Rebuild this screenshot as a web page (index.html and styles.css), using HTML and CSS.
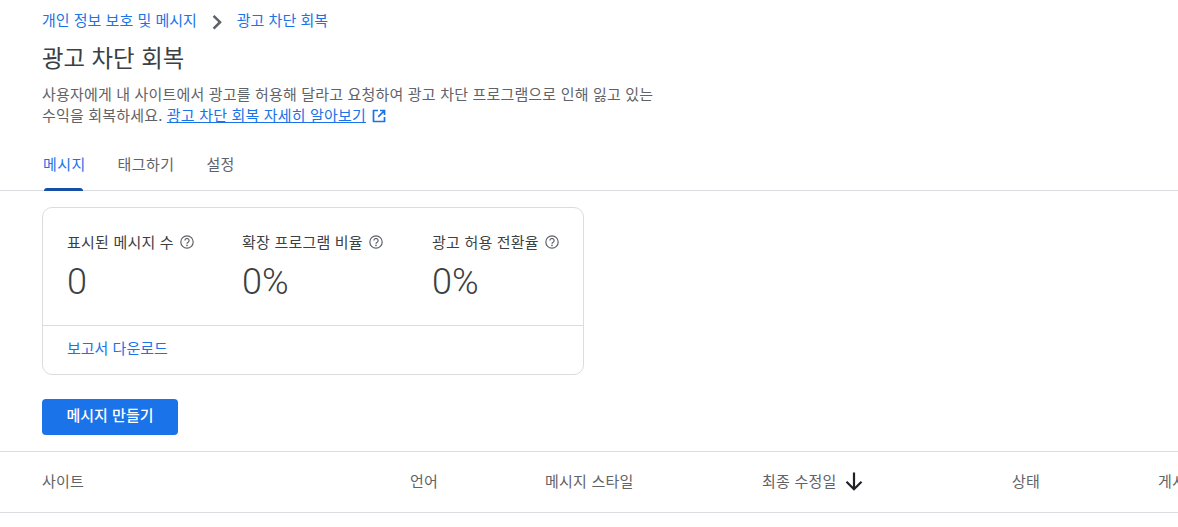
FILE: index.html
```html
<!DOCTYPE html>
<html lang="ko">
<head>
<meta charset="utf-8">
<title>광고 차단 회복</title>
<link rel="stylesheet" href="styles.css">
</head>
<body>
<header class="head">
  <nav class="crumbs">
    <a class="link" href="#">개인 정보 보호 및 메시지</a>
    <svg class="chev" width="24" height="24" viewBox="0 0 24 24"><path d="M8.6 5.8 15 12.2 8.6 18.6" fill="none" stroke="#5f6368" stroke-width="2.6"/></svg>
    <a class="link" href="#">광고 차단 회복</a>
  </nav>
  <h1 class="title">광고 차단 회복</h1>
  <p class="desc">사용자에게 내 사이트에서 광고를 허용해 달라고 요청하여 광고 차단 프로그램으로 인해 잃고 있는 수익을 회복하세요. <a class="learn" href="#">광고 차단 회복 자세히 알아보기</a><svg class="ext" width="16" height="16" viewBox="0 0 16 16"><path d="M7 2.5H2.5v11h11V9M9 2.5h4.5V7M13.5 2.5 7.2 8.8" fill="none" stroke="#1a73e8" stroke-width="1.7"/></svg></p>
</header>
<div class="tabs">
  <a class="tab active" href="#">메시지</a>
  <a class="tab" href="#">태그하기</a>
  <a class="tab" href="#">설정</a>
</div>
<main class="content">
  <section class="card">
    <div class="stats">
      <div class="stat stat-a">
        <div class="label">표시된 메시지 수 <svg class="help" width="14" height="14" viewBox="0 0 14 14"><circle cx="7" cy="7" r="6.2" fill="none" stroke="#5f6368" stroke-width="1.2"/><path d="M4.9 5.5a2.1 2.1 0 1 1 3.2 1.8c-.8.4-1.1.8-1.1 1.5" fill="none" stroke="#5f6368" stroke-width="1.2"/><circle cx="7" cy="10.4" r=".8" fill="#5f6368"/></svg></div>
        <div class="value">0</div>
      </div>
      <div class="stat stat-b">
        <div class="label">확장 프로그램 비율 <svg class="help" width="14" height="14" viewBox="0 0 14 14"><circle cx="7" cy="7" r="6.2" fill="none" stroke="#5f6368" stroke-width="1.2"/><path d="M4.9 5.5a2.1 2.1 0 1 1 3.2 1.8c-.8.4-1.1.8-1.1 1.5" fill="none" stroke="#5f6368" stroke-width="1.2"/><circle cx="7" cy="10.4" r=".8" fill="#5f6368"/></svg></div>
        <div class="value">0%</div>
      </div>
      <div class="stat">
        <div class="label">광고 허용 전환율 <svg class="help" width="14" height="14" viewBox="0 0 14 14"><circle cx="7" cy="7" r="6.2" fill="none" stroke="#5f6368" stroke-width="1.2"/><path d="M4.9 5.5a2.1 2.1 0 1 1 3.2 1.8c-.8.4-1.1.8-1.1 1.5" fill="none" stroke="#5f6368" stroke-width="1.2"/><circle cx="7" cy="10.4" r=".8" fill="#5f6368"/></svg></div>
        <div class="value">0%</div>
      </div>
    </div>
    <div class="card-foot"><a class="link" href="#">보고서 다운로드</a></div>
  </section>
  <button class="primary" type="button">메시지 만들기</button>
</main>
<div class="table-head">
  <div class="col col-site">사이트</div>
  <div class="col col-lang">언어</div>
  <div class="col col-style">메시지 스타일</div>
  <div class="col col-date">최종 수정일<svg class="sort" width="24" height="24" viewBox="0 0 24 24"><path d="M12 3.5v16.5M4.5 12.8 12 20.2l7.5-7.4" fill="none" stroke="#202124" stroke-width="2.2"/></svg></div>
  <div class="col col-state">상태</div>
  <div class="col col-pub">게시됨</div>
</div>
</body>
</html>
```
FILE: styles.css
```css
* { box-sizing: border-box; }
html, body { height: 100%; }
body {
  margin: 0;
  overflow: hidden;
  background: #fff;
  color: #3c4043;
  font-family: "Noto Sans CJK KR", "Noto Sans", sans-serif;
  font-size: 15px;
}
a { text-decoration: none; }
.link { color: #1a73e8; font-size: 15px; line-height: 20px; }
.head { padding: 8px 0 0 42px; }
.crumbs { display: flex; align-items: center; height: 24px; }
.chev { margin: 3px 8px 0 8px; }
.title {
  margin: 7px 0 0;
  font-size: 23.4px;
  font-weight: 400;
  line-height: 36px;
  color: #3c4043;
}
.desc {
  margin: 8px 0 0;
  width: 620px;
  font-size: 15px;
  letter-spacing: .17px;
  line-height: 21px;
  color: #5f6368;
}
.learn { color: #1a73e8; text-decoration: underline; }
.ext { margin-left: 5px; vertical-align: -3px; }
.tabs {
  display: flex;
  height: 65px;
  margin-top: 1px;
  padding: 16px 0 0 42px;
  border-bottom: 1px solid #dadce0;
  gap: 30px;
}
.tab {
  position: relative;
  color: #5f6368;
  line-height: 44px;
  height: 49px;
  padding: 0 1px;
  letter-spacing: .4px;
}
.tab.active { color: #1a73e8; }
.tab.active::after {
  content: "";
  position: absolute;
  left: 2px;
  right: 4px;
  bottom: 0;
  height: 3px;
  background: #174ea6;
  border-radius: 3px 3px 0 0;
}
.content { padding: 16px 0 0 42px; }
.card {
  width: 542px;
  height: 168px;
  border: 1px solid #dadce0;
  border-radius: 10px;
}
.stats {
  display: flex;
  height: 117px;
  padding: 24px 0 0 24px;
}
.stat-a { width: 175px; }
.stat-b { width: 190px; }
.label {
  display: flex;
  align-items: center;
  gap: 6px;
  height: 20px;
  color: #3c4043;
  line-height: 20px;
  letter-spacing: .2px;
  white-space: nowrap;
}
.help { flex: none; }
.value {
  margin-top: 8px;
  font-family: "Roboto", sans-serif;
  font-size: 36px;
  font-weight: 300;
  line-height: 44px;
  color: #3c4043;
}
.card-foot {
  height: 49px;
  padding: 11px 24px 0;
  border-top: 1px solid #dadce0;
}
.primary {
  display: block;
  width: 136px;
  height: 36px;
  margin-top: 24px;
  padding: 0 0 5px;
  border: 0;
  border-radius: 4px;
  background: #1a73e8;
  color: #fff;
  font-family: inherit;
  font-size: 15px;
  font-weight: 500;
}
.table-head {
  display: flex;
  align-items: center;
  height: 62px;
  margin-top: 16px;
  padding: 0 0 4px 42px;
  border-top: 1px solid #dadce0;
  border-bottom: 1px solid #dadce0;
  color: #5f6368;
  letter-spacing: .2px;
  white-space: nowrap;
}
.col { flex: none; }
.col-site { width: 368px; }
.col-lang { width: 135px; }
.col-style { width: 217px; }
.col-date { width: 250px; display: flex; align-items: center; gap: 6px; }
.sort { margin-top: 2px; }
.col-state { width: 146px; }
```
